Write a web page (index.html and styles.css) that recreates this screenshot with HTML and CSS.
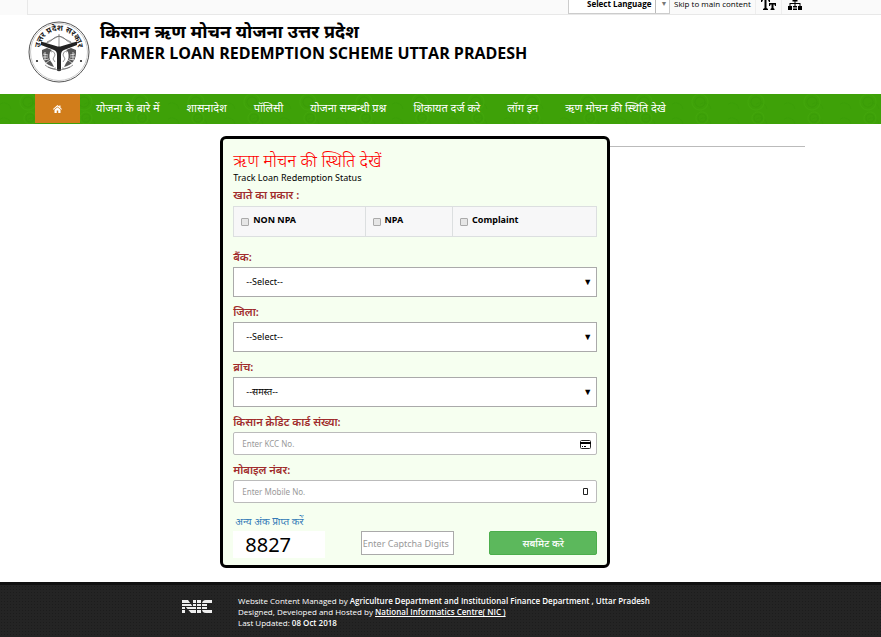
FILE: index.html
```html
<!DOCTYPE html>
<html lang="hi">
<head>
<meta charset="utf-8">
<meta name="viewport" content="width=device-width, initial-scale=1">
<title>किसान ऋण मोचन योजना उत्तर प्रदेश</title>
<link rel="stylesheet" href="styles.css">
</head>
<body>
<div class="topbar">
  <button class="language" type="button"><span>Select Language</span><span class="language-arrow">▼</span></button>
  <a class="skip" href="#main">Skip to main content</a>
  <a class="tool" href="#" aria-label="Text size">
    <svg width="16" height="10" viewBox="0 0 16 10"><path d="M0 0h9v2H8L7 0H5.500v8L7 9v1H2V9l1.500-1V0H2L1 2H0zM8 3h7v3h-1l-.500-1.500h-1V8l1 1v1H9.500V9l1-1V4.500h-1L9 6H8z"/></svg>
  </a>
  <a class="tool" href="#" aria-label="Sitemap">
    <svg width="14" height="10" viewBox="0 0 14 10"><path d="M4.500 0h5v1.500h-2V3h5v3H14v4H9.500V6h2V4h-4v2h2v4h-5V6h2V4h-4v2h2v4H0V6h1.500V3h5V1.500h-2z"/><path class="gap" d="M4.500 6v4M9.500 6v4M5 8h4"/></svg>
  </a>
</div>
<header class="masthead">
  <svg class="seal" viewBox="0 0 62 62" aria-hidden="true">
    <defs><path id="arc" d="M12.800 34A19 19 0 1 1 49.200 34"/></defs>
    <circle class="ring" cx="31" cy="31" r="30"/>
    <circle class="ring thin" cx="31" cy="31" r="28.500"/>
    <text class="seal-text"><textPath href="#arc" startOffset="50%" text-anchor="middle">उत्तर प्रदेश सरकार</textPath></text>
    <circle cx="9" cy="40" r="1.100"/><circle cx="53" cy="40" r="1.100"/>
    <path class="bow" d="M15 22.500Q22 22 26 17Q31 13.500 36 17Q40 22 47 22.500M19 21L31 15L43 21M31 13V26"/>
    <path d="M13 20.500L28 25Q31 26 34 25L49 20.500V24L36 29Q33 30 33 34V49.500Q31 51 29 49.500V34Q29 30 26 29L13 24Z"/>
    <path class="fish" d="M14 29Q13 43 26 46L24 42Q20 38 22 31L24 29L19 27ZM48 29Q49 43 36 46L38 42Q42 38 40 31L38 29L43 27Z"/>
    <path class="scale" d="M15 33l5 1M15 36l5 0M16 39l5-1M18 42l4-3M17 31v8M47 33l-5 1M47 36l-5 0M46 39l-5-1M44 42l-4-3M45 31v8"/>
    <path class="bow" d="M23 31Q26 29 27 34L25 38L27 41M39 31Q36 29 35 34L37 38L35 41M20 46Q31 52 42 46M17 44Q23 49 28 47M45 44Q39 49 34 47"/>
  </svg>
  <div class="titles">
    <h1>किसान ऋण मोचन योजना उत्तर प्रदेश</h1>
    <p>FARMER LOAN REDEMPTION SCHEME UTTAR PRADESH</p>
  </div>
</header>
<nav class="nav">
  <a class="home" href="#" aria-label="Home">
    <svg width="9" height="8" viewBox="0 0 18 16"><path d="M9 0L0 8l1 1.500L9 3l8 6.500L18 8l-3-2.700V1h-2.500v2zM9 4.500L3 9.500V16h4.500v-5h3v5H15V9.500z"/></svg>
  </a>
  <a href="#">योजना के बारे में</a>
  <a href="#">शासनादेश</a>
  <a href="#">पॉलिसी</a>
  <a href="#">योजना सम्बन्धी प्रश्न</a>
  <a href="#">शिकायत दर्ज करे</a>
  <a href="#">लॉग इन</a>
  <a href="#">ऋण मोचन की स्थिति देखे</a>
</nav>
<main id="main" class="main">
  <form class="card">
    <h2>ऋण मोचन की स्थिति देखें</h2>
    <p class="sub">Track Loan Redemption Status</p>
    <p class="label">खाते का प्रकार :</p>
    <div class="types">
      <label><input type="checkbox">NON NPA</label>
      <label><input type="checkbox">NPA</label>
      <label><input type="checkbox">Complaint</label>
    </div>
    <div class="field">
      <label class="label" for="bank">बैंक:</label>
      <div class="control"><select id="bank"><option>--Select--</option></select><span class="caret">▼</span></div>
    </div>
    <div class="field">
      <label class="label" for="district">जिला:</label>
      <div class="control"><select id="district"><option>--Select--</option></select><span class="caret">▼</span></div>
    </div>
    <div class="field">
      <label class="label" for="branch">ब्रांच:</label>
      <div class="control"><select id="branch"><option>--समस्त--</option></select><span class="caret">▼</span></div>
    </div>
    <div class="field">
      <label class="label" for="kcc">किसान क्रेडिट कार्ड संख्या:</label>
      <div class="control"><input class="text" id="kcc" type="text" placeholder="Enter KCC No.">
        <svg class="icon" width="11" height="9" viewBox="0 0 11 9"><rect x=".5" y=".5" width="10" height="8" rx="1" fill="#fff" stroke="#222"/><path d="M0 2h11v2H0zM2 6h1v1H2zM4 6h2v1H4z"/></svg>
      </div>
    </div>
    <div class="field">
      <label class="label" for="mobile">मोबाइल नंबर:</label>
      <div class="control"><input class="text" id="mobile" type="text" placeholder="Enter Mobile No.">
        <svg class="icon phone" width="5" height="7" viewBox="0 0 5 7"><path d="M.5.500h4v6h-4z" fill="none" stroke="#222"/></svg>
      </div>
    </div>
    <div class="submit-row">
      <div class="captcha">
        <a href="#">अन्य अंक प्राप्त करें</a>
        <span class="digits">8827</span>
      </div>
      <input class="captcha-input" type="text" placeholder="Enter Captcha Digits" aria-label="Captcha">
      <button class="submit" type="submit">सबमिट करे</button>
    </div>
  </form>
  <hr class="rule">
</main>
<footer class="footer">
  <svg class="nic" viewBox="0 0 30 13" aria-label="NIC"><path d="M0 0h6l5 7V0h3v13H9L3 6v7H0zM15 0h4v13h-4zM20 4q0-4 4-4h6v4h-5v5h5v4h-6q-4 0-4-4z"/><path class="stripe" d="M0 3.500h30M0 6.500h30M0 9.500h30"/></svg>
  <div class="credits">
    <p>Website Content Managed by <strong>Agriculture Department and Institutional Finance Department , Uttar Pradesh</strong></p>
    <p>Designed, Developed and Hosted by <a href="#">National Informatics Centre( NIC )</a></p>
    <p>Last Updated: <strong>08 Oct 2018</strong></p>
  </div>
</footer>
</body>
</html>
```
FILE: styles.css
```css
* { box-sizing: border-box; }

body {
  margin: 0;
  min-height: 100vh;
  display: flex;
  flex-direction: column;
  background: #fff;
  color: #000;
  font: 9px/12px "Noto Sans", "Noto Sans Devanagari", sans-serif;
}

h1, h2, p { margin: 0; }
a { color: inherit; text-decoration: none; }
button, input, select { font: inherit; color: inherit; }

.topbar {
  height: 15px;
  margin-left: 27px;
  display: flex;
  justify-content: flex-end;
  padding-right: 73px;
  background: #fafafa;
  border-left: 1px solid #e8e8e8;
  border-bottom: 1px solid #e8e8e8;
  box-shadow: -27px 0 #fafafa;
}
.language {
  width: 102px;
  height: 14px;
  display: flex;
  gap: 4px;
  padding: 0 3px 0 18px;
  background: #fff;
  border: 1px solid #ccc;
  border-top: 0;
  font: bold 8px/7px "Open Sans", sans-serif;
  white-space: nowrap;
}
.language-arrow {
  border-left: 1px solid #bbb;
  padding-left: 4px;
  color: #777;
  font-size: 7px;
}
.skip {
  width: 86px;
  padding-left: 4px;
  border-right: 1px solid #eee;
  font: 8px/7px "Open Sans", sans-serif;
  white-space: nowrap;
}
.tool {
  height: 14px;
  width: 26px;
  display: flex;
  align-items: flex-start;
  justify-content: center;
  border-right: 1px solid #eee;
}
.tool:last-child { border: 0; }
.gap { fill: none; stroke: #fafafa; stroke-width: 1; }

.masthead {
  display: flex;
  gap: 10px;
  height: 79px;
  padding: 6px 0 0 28px;
}
.seal { width: 62px; height: 62px; fill: #222; }
.ring { fill: none; stroke: #555; stroke-width: 1; }
.thin { stroke: #999; stroke-width: 0.5; }
.seal-text { font-size: 8px; font-weight: bold; }
.bow { fill: none; stroke: #666; stroke-width: 0.7; }
.fish { fill: #555; }
.scale { fill: none; stroke: #fff; stroke-width: 0.7; }
.titles { font-family: "Open Sans", "Noto Sans Devanagari", sans-serif; }
.titles h1 { font-size: 18px; line-height: 20px; font-weight: 700; }
.titles p { font-size: 16px; line-height: 24px; font-weight: 700; }

.nav {
  display: flex;
  height: 30px;
  padding-left: 35px;
  color: #fff;
  font-size: 11px;
  line-height: 28px;
  background:
    radial-gradient(circle at 28px 8px, transparent 4px, #3a9c07 5px, transparent 6px, transparent 7px, #42a60b 8px, transparent 9px) 0 0 / 56px 30px,
    radial-gradient(circle at 30px 24px, transparent 3px, #3a9c07 4px, transparent 5px, #42a60b 6px, transparent 7px) 0 0 / 56px 30px,
    radial-gradient(circle at 4px 16px, transparent 6px, #3b9e07 7px, transparent 8px) 0 0 / 28px 15px,
    #3ea108;
}
.nav a { padding-right: 27px; white-space: nowrap; }
.nav .home {
  width: 45px;
  height: 29px;
  margin-right: 16px;
  padding: 0;
  display: flex;
  align-items: center;
  justify-content: center;
  background: #d17d1b;
}
.home svg { fill: #fff; }

.main {
  display: flex;
  align-items: flex-start;
  margin: 12px 76px 14px 25%;
}
.card {
  flex: 0 1 390px;
  min-width: 0;
  padding: 10px 10px 7px;
  background: #f6fff0;
  border: 3px solid #000;
  border-radius: 6px;
}
.rule {
  flex: 1;
  margin: 10px 0 0;
  border: 0;
  border-top: 1px solid #bbb;
}
.card h2 { font-size: 17px; line-height: 24px; font-weight: 300; color: #f00; }
.sub { line-height: 10px; }
.label {
  display: block;
  font-size: 11px;
  line-height: 20px;
  font-weight: 600;
  color: #a02c2c;
}
.card > .label { line-height: 23px; }
.types {
  display: grid;
  grid-template-columns: 131fr 88fr 145fr;
  height: 31px;
  margin-bottom: 10px;
  background: #f7f7f8;
  border: 1px solid #dcdfe0;
}
.types label {
  display: flex;
  align-items: flex-start;
  gap: 4px;
  padding: 7px 0 0 7px;
  font-weight: 700;
}
.types label + label { border-left: 1px solid #dcdfe0; }
.types input {
  appearance: none;
  width: 8px;
  height: 8px;
  margin: 4px 0 0;
  border: 1px solid #aaa;
  border-radius: 1px;
  background: #e6e6e6;
}
.field { margin-bottom: 5px; }
.control { position: relative; }
select {
  appearance: none;
  display: block;
  width: 100%;
  height: 30px;
  padding: 0 12px;
  background: #fff;
  border: 1px solid #aaa;
  border-radius: 0;
}
.caret {
  position: absolute;
  right: 5px;
  top: 9px;
  font-size: 9px;
  pointer-events: none;
}
.text {
  display: block;
  width: 100%;
  height: 23px;
  padding: 0 8px;
  background: #fff;
  border: 1px solid #bbb;
  border-radius: 2px;
  font-size: 8px;
}
::placeholder { color: #999; opacity: 1; }
.icon { position: absolute; right: 6px; top: 8px; }
.phone { right: 9px; }

.submit-row {
  display: flex;
  justify-content: space-between;
  align-items: flex-end;
  padding-top: 3px;
}
.captcha { width: 92px; display: flex; flex-direction: column; }
.captcha a { padding-left: 2px; font-size: 10px; line-height: 20px; color: #337ab7; white-space: nowrap; }
.digits {
  height: 27px;
  padding-left: 12px;
  background: #fff;
  font-size: 20px;
  line-height: 28px;
}
.captcha-input {
  width: 93px;
  height: 24px;
  margin: 0 0 3px;
  padding: 0 1px;
  background: #fff;
  border: 1px solid #aaa;
}
.submit {
  width: 108px;
  height: 24px;
  margin-bottom: 3px;
  padding: 0;
  background: #5cb85c;
  border: 1px solid #4cae4c;
  border-radius: 2px;
  color: #fff;
  font-size: 10px;
  font-weight: 500;
}

.footer {
  flex: 1;
  display: flex;
  padding: 10px 0 8px 182px;
  background: radial-gradient(#1c1c1c 1px, transparent 1px) 0 0 / 3px 3px, #242424;
  border-top: 3px solid #111;
  color: #fff;
  font: 8px/11px "Open Sans", sans-serif;
}
.nic { width: 30px; height: 13px; margin-top: 5px; fill: #eee; }
.stripe { stroke: #222; stroke-width: 1; }
.credits { margin-left: 15px; padding-left: 11px; }
.credits strong { font-weight: 600; }
.credits a { font-weight: 600; text-decoration: underline; }
```
